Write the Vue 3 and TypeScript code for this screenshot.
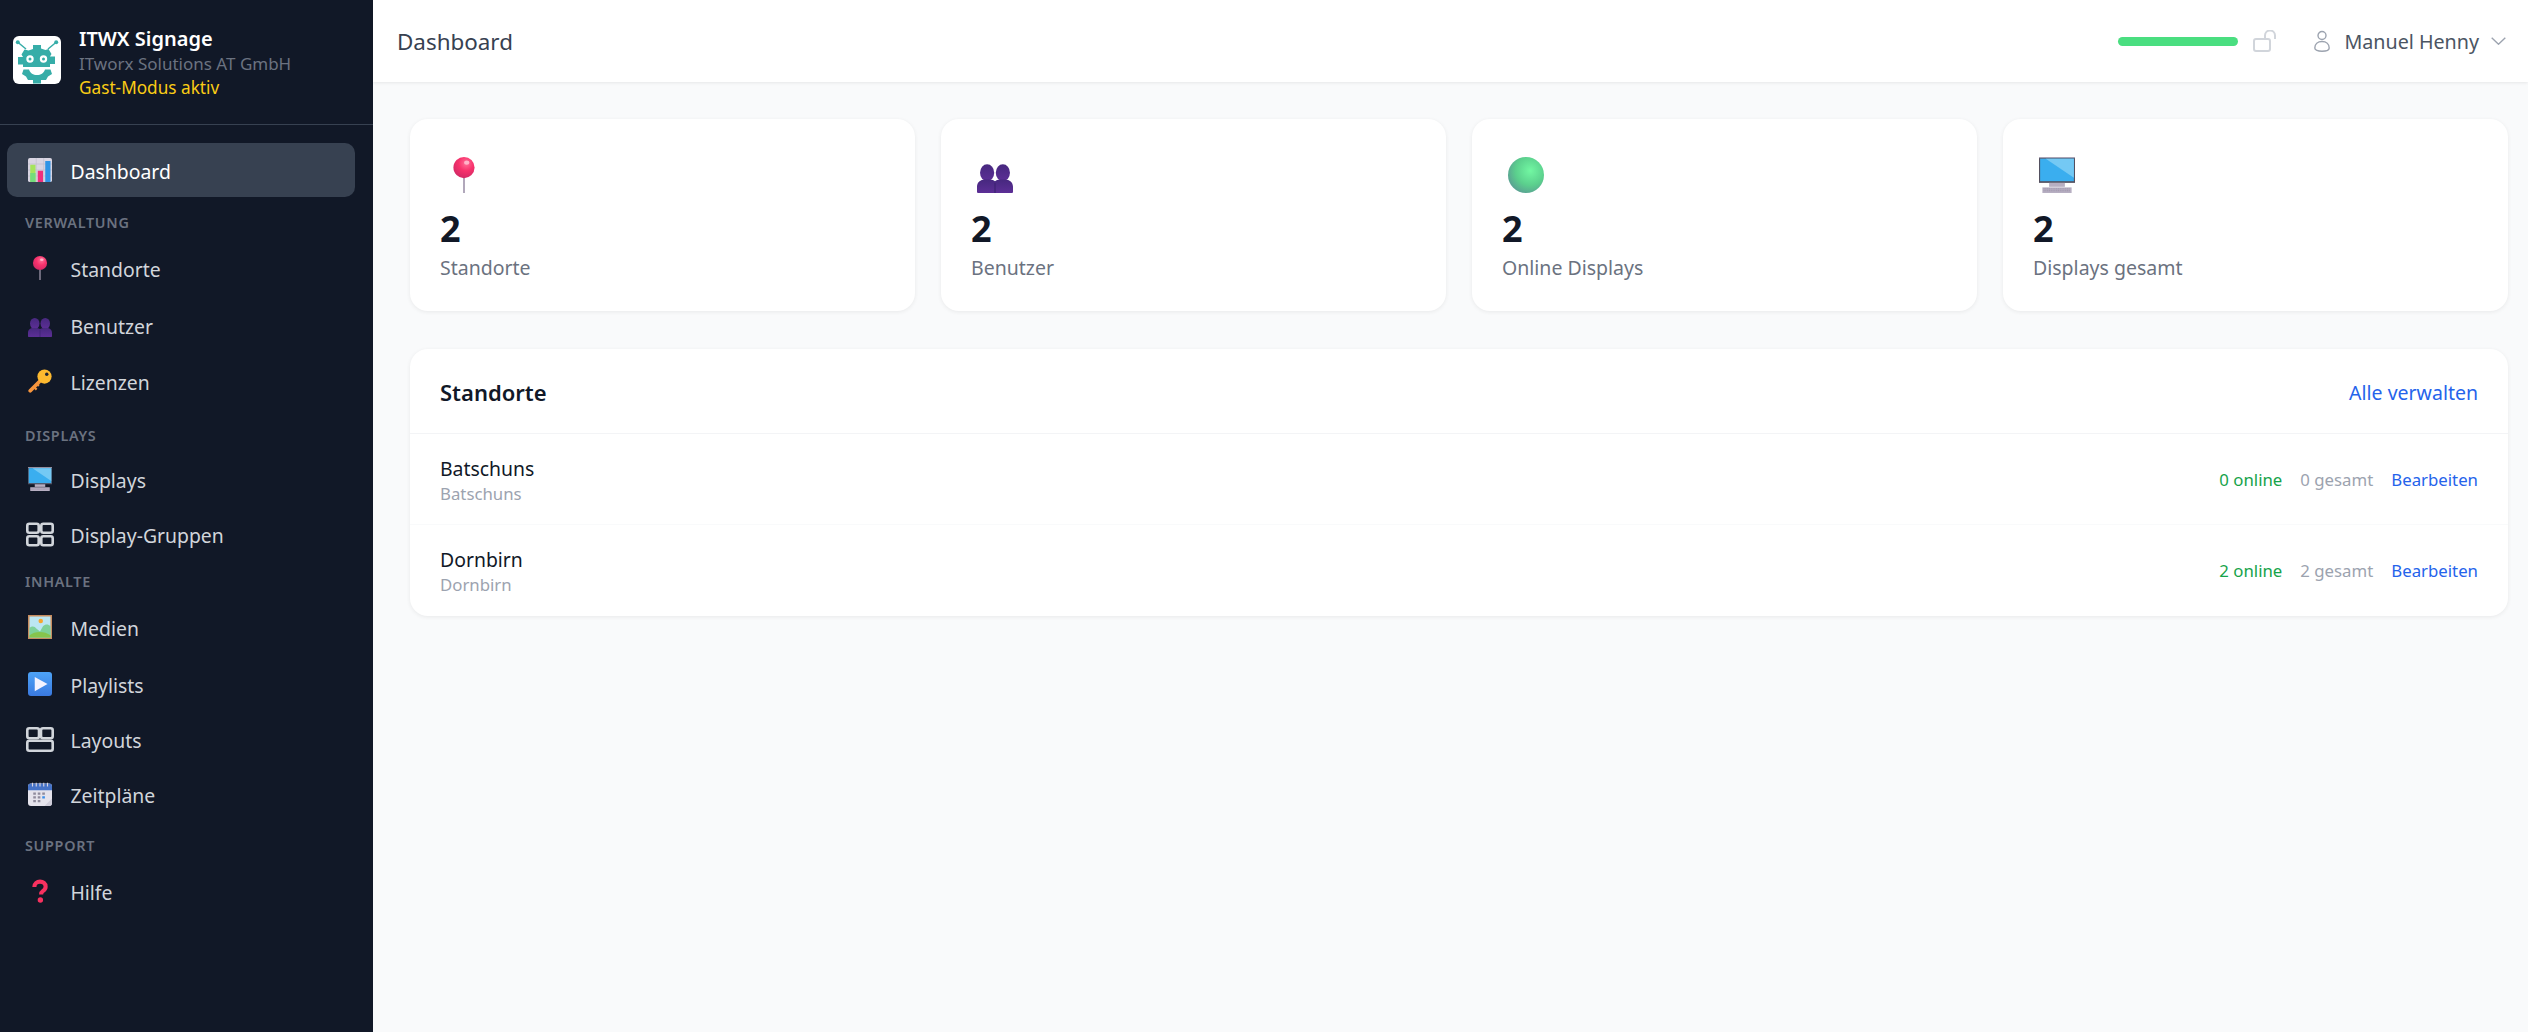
<template>
  <div class="app">
    <!-- shared icon symbols -->
    <svg class="icon-defs" aria-hidden="true">
      <defs>
        <radialGradient id="gPin" cx="0.6" cy="0.3" r="0.7">
          <stop offset="0" stop-color="#ff6f97" />
          <stop offset="0.5" stop-color="#f8326c" />
          <stop offset="1" stop-color="#d42a66" />
        </radialGradient>
        <radialGradient id="gBall" cx="0.62" cy="0.38" r="0.68">
          <stop offset="0" stop-color="#72f7a2" />
          <stop offset="0.6" stop-color="#5bcf8d" />
          <stop offset="1" stop-color="#5a9f93" />
        </radialGradient>
        <linearGradient id="gPlay" x1="0" y1="0" x2="0" y2="1">
          <stop offset="0" stop-color="#4da3f7" />
          <stop offset="1" stop-color="#3a79e0" />
        </linearGradient>
        <linearGradient id="gUser" x1="0" y1="0" x2="0" y2="1">
          <stop offset="0" stop-color="#47287f" />
          <stop offset="1" stop-color="#5c2f96" />
        </linearGradient>
      </defs>
      <symbol id="i-chart" viewBox="0 0 32 32">
        <rect width="32" height="32" rx="2.5" fill="#d9d5e2" />
        <path d="M0 8h32M0 16h32M0 24h32M11 0v32M21 0v32" stroke="#c2bdcd" stroke-width="1" />
        <rect x="3" y="9" width="7" height="23" fill="#a5e45c" />
        <rect x="3" y="20" width="7" height="12" fill="#74dc7c" />
        <rect x="13" y="17" width="7" height="15" fill="#ef2f7c" />
        <rect x="23" y="4" width="7" height="28" fill="#2f94e6" />
      </symbol>
      <symbol id="i-pin" viewBox="0 0 32 32">
        <rect x="15.2" y="18" width="1.6" height="14" fill="#a99fb4" />
        <circle cx="16" cy="9.4" r="9.4" fill="url(#gPin)" />
        <ellipse cx="18.4" cy="5" rx="2.4" ry="1.8" fill="#ffb3c8" />
      </symbol>
      <symbol id="i-users" viewBox="0 0 32 32">
        <g fill="url(#gUser)">
          <ellipse cx="9" cy="14" rx="6.300" ry="7.500" />
          <ellipse cx="23" cy="14" rx="6.300" ry="7.500" />
          <path d="M0 31v-4.500C0 22.500 3 20 7 20h4c3 0 5 1.500 5 1.500s2-1.500 5-1.500h4c4 0 7 2.500 7 6.500V31a1 1 0 0 1-1 1H1a1 1 0 0 1-1-1z" />
        </g>
        <path d="M16 23v9" stroke="#3c2370" stroke-width="1" />
      </symbol>
      <symbol id="i-key" viewBox="0 0 32 32">
        <path d="M20 12 3 29" stroke="#f7953d" stroke-width="5" stroke-linecap="round" />
        <path d="m8 24 3.500 3.500M12 20l2.500 2.500" stroke="#f7953d" stroke-width="3" />
        <circle cx="22" cy="10" r="9.500" fill="#fdb92f" />
        <circle cx="25" cy="7" r="2.300" fill="#1f2433" />
      </symbol>
      <symbol id="i-monitor" viewBox="0 0 32 32">
        <rect x="0" y="0" width="32" height="23" fill="#54505f" />
        <rect x="0" y="0" width="32" height="1" fill="#a9a3b4" />
        <rect x="1" y="1.500" width="30" height="20" fill="#3aaeef" />
        <path d="M6 1.500h25v17z" fill="#74c9f4" />
        <rect x="9" y="23" width="14" height="3.500" fill="#b7afc2" />
        <rect x="3" y="27" width="26" height="5" fill="#b7afc2" />
        <path d="M4 28.300h24M4 30h24" stroke="#938aa2" stroke-width=".6" stroke-dasharray="1 .6" />
      </symbol>
      <symbol id="i-group" viewBox="0 0 28 24">
        <g fill="none" stroke="#d1d5db" stroke-width="2.600">
          <rect x="1.300" y="1.300" width="11.400" height="9" rx="2" />
          <rect x="15.300" y="1.300" width="11.400" height="9" rx="2" />
          <rect x="1.300" y="13.700" width="11.400" height="9" rx="2" />
          <rect x="15.300" y="13.700" width="11.400" height="9" rx="2" />
        </g>
      </symbol>
      <symbol id="i-picture" viewBox="0 0 32 32">
        <rect width="32" height="32" fill="#c78c5f" />
        <rect x="2" y="2" width="28" height="28" fill="#bce6f2" />
        <circle cx="17" cy="8" r="3" fill="#f8a62d" />
        <path d="M2 17c4-3 7-2 9 1l5 4 4-7c3-3 7-3 10 0v15H2z" fill="#7fd199" />
        <path d="M2 30v-3c7-6 20-6 28 0v3z" fill="#86c44c" />
      </symbol>
      <symbol id="i-play" viewBox="0 0 32 32">
        <rect width="32" height="32" rx="4" fill="url(#gPlay)" />
        <path d="M9 6.500 26 16 9 25.500z" fill="#f4f3ff" />
      </symbol>
      <symbol id="i-layout" viewBox="0 0 28 25">
        <g fill="none" stroke="#d1d5db" stroke-width="2.600">
          <rect x="1.300" y="1.300" width="11.700" height="10" rx="2" />
          <rect x="15" y="1.300" width="11.700" height="10" rx="2" />
          <rect x="1.300" y="13.700" width="25.400" height="10" rx="2" />
        </g>
      </symbol>
      <symbol id="i-calendar" viewBox="0 0 32 32">
        <rect x="0" y="2" width="32" height="30" rx="4" fill="#e5e3ec" />
        <path d="M0 11V6a4 4 0 0 1 4-4h24a4 4 0 0 1 4 4v5z" fill="#4673c8" />
        <path d="M6 1v5M11 1v5M16 1v5M21 1v5M26 1v5" stroke="#d9d6e3" stroke-width="1.500" />
        <g fill="#8f8b9c">
          <rect x="7" y="14" width="3.500" height="3" /><rect x="13" y="14" width="3.500" height="3" /><rect x="19" y="14" width="3.500" height="3" />
          <rect x="7" y="19" width="3.500" height="3" /><rect x="13" y="19" width="3.500" height="3" />
          <rect x="7" y="24" width="3.500" height="3" /><rect x="13" y="24" width="3.500" height="3" />
        </g>
        <rect x="19" y="19" width="3.500" height="3" fill="#3b8ee8" />
        <path d="M32 22v6a4 4 0 0 1-4 4h-6z" fill="#cfccd9" />
      </symbol>
      <symbol id="i-help" viewBox="0 0 32 32">
        <path d="M8.500 10.500C8.500 6 12 3.500 16 3.500s7.500 2.500 7.500 6.700c0 3-1.800 4.500-3.800 6-1.600 1.100-2.200 2-2.200 4.300" fill="none" stroke="#f8315f" stroke-width="5.500" />
        <circle cx="16.500" cy="28" r="3.600" fill="#f8315f" />
      </symbol>
    </svg>

    <aside class="sidebar">
      <div class="brand">
        <div class="logo">
          <svg viewBox="0 0 48 48" width="48" height="48">
            <g fill="#36ada8">
              <path d="M4.500 6 13 13M43.500 6 35 13" stroke="#36ada8" stroke-width="1.500" />
              <circle cx="4.800" cy="6.200" r="2" />
              <circle cx="43.200" cy="6.200" r="2" />
              <path d="M20 9h8v3.500l4.500 1.500 3-1 3 5-1.500 2.500h5v7.500h-5V31H10v-2.500H5V21h5L8.500 18.500l3-5 4 1 4.500-1.500z" />
              <path d="M10.500 33.500h5.500c1.500 4 4 5.500 8 5.500s6.500-1.500 8-5.500h5.500L39 38l-4 2.500L33 44h-5v3.500h-8V44h-5l-2-3.500L9 38z" />
            </g>
            <g fill="none" stroke="#fff" stroke-width="2.200">
              <circle cx="17" cy="23" r="2.600" />
              <circle cx="30.500" cy="23" r="2.600" />
            </g>
          </svg>
        </div>
        <div class="brand-text">
          <div class="brand-name">ITWX Signage</div>
          <div class="brand-org">ITworx Solutions AT GmbH</div>
          <div class="brand-mode">Gast-Modus aktiv</div>
        </div>
      </div>
      <nav class="nav">
        <template v-for="entry in navEntries" :key="entry.label">
          <div v-if="entry.section" class="nav-section" :class="entry.section">{{ entry.label }}</div>
          <a v-else class="nav-item" :class="{ active: entry.active, slim: entry.slim }">
            <svg class="nav-icon" :class="{ wide: entry.slim }"><use :href="'#i-' + entry.icon" /></svg>
            <span>{{ entry.label }}</span>
          </a>
        </template>
      </nav>
    </aside>

    <div class="main">
      <header class="topbar">
        <div class="page-title">Dashboard</div>
        <div class="top-right">
          <div class="progress"></div>
          <svg class="lock" viewBox="0 0 24 22" width="24" height="22" fill="none" stroke="#d1d5db" stroke-width="2">
            <rect x="1" y="9" width="16" height="12" rx="2" />
            <path d="M12 9V5.500a5 5 0 0 1 10 0V9" />
          </svg>
          <div class="user">
            <svg viewBox="0 0 16 22" width="16" height="22" fill="none" stroke="#9ca3af" stroke-width="1.400">
              <circle cx="8" cy="5.500" r="4" />
              <path d="M.8 18c0-4 3-6.500 7.200-6.500s7.200 2.500 7.200 6.500c0 2-3 3.200-7.200 3.200S.8 20 .8 18z" />
            </svg>
            <span class="user-name">Manuel Henny</span>
            <svg viewBox="0 0 15 8" width="15" height="8" fill="none" stroke="#9ca3af" stroke-width="1.400">
              <path d="m.7.7 6.800 6.500L14.300.7" />
            </svg>
          </div>
        </div>
      </header>

      <main class="content">
        <section class="stats">
          <div v-for="stat in stats" :key="stat.label" class="stat-card">
            <div class="stat-icon">
              <svg v-if="stat.icon === 'ball'" viewBox="0 0 36 36" width="36" height="36"><circle cx="18" cy="18" r="18" fill="url(#gBall)" /></svg>
              <svg v-else width="36" height="36"><use :href="'#i-' + stat.icon" /></svg>
            </div>
            <div class="stat-value">{{ stat.value }}</div>
            <div class="stat-label">{{ stat.label }}</div>
          </div>
        </section>

        <section class="panel">
          <div class="panel-head">
            <h2>Standorte</h2>
            <a class="link">Alle verwalten</a>
          </div>
          <div v-for="loc in locations" :key="loc.name" class="loc-row">
            <div class="loc-text">
              <div class="loc-name">{{ loc.name }}</div>
              <div class="loc-city">{{ loc.city }}</div>
            </div>
            <div class="loc-meta">
              <span class="online">{{ loc.online }} online</span>
              <span class="total">{{ loc.total }} gesamt</span>
              <a class="edit">Bearbeiten</a>
            </div>
          </div>
        </section>
      </main>
    </div>
  </div>
</template>

<script setup lang="ts">
interface NavEntry {
  label: string
  icon?: string
  section?: string
  active?: boolean
  slim?: boolean
}

const navEntries: NavEntry[] = [
  { label: 'Dashboard', icon: 'chart', active: true },
  { label: 'Verwaltung', section: 'sec-admin' },
  { label: 'Standorte', icon: 'pin' },
  { label: 'Benutzer', icon: 'users' },
  { label: 'Lizenzen', icon: 'key' },
  { label: 'Displays', section: 'sec-displays' },
  { label: 'Displays ', icon: 'monitor' },
  { label: 'Display-Gruppen', icon: 'group', slim: true },
  { label: 'Inhalte', section: 'sec-content' },
  { label: 'Medien', icon: 'picture' },
  { label: 'Playlists', icon: 'play' },
  { label: 'Layouts', icon: 'layout', slim: true },
  { label: 'Zeitpläne', icon: 'calendar' },
  { label: 'Support', section: 'sec-support' },
  { label: 'Hilfe', icon: 'help' }
]

const stats = [
  { icon: 'pin', value: 2, label: 'Standorte' },
  { icon: 'users', value: 2, label: 'Benutzer' },
  { icon: 'ball', value: 2, label: 'Online Displays' },
  { icon: 'monitor', value: 2, label: 'Displays gesamt' }
]

const locations = [
  { name: 'Batschuns', city: 'Batschuns', online: 0, total: 0 },
  { name: 'Dornbirn', city: 'Dornbirn', online: 2, total: 2 }
]
</script>

<style>
html, body { background: #f9fafb; }
</style>

<style scoped>
.app {
  display: flex; min-height: 1032px;
  font-family: "Noto Sans", "Open Sans", sans-serif;
  color: #111827;
}
.icon-defs { position: absolute; width: 0; height: 0; overflow: hidden; }

.sidebar { width: 373px; flex-shrink: 0; background: #111827; }
.brand {
  display: flex; align-items: center; gap: 18px;
  height: 125px; padding: 0 13px; box-sizing: border-box;
  border-bottom: 1px solid #374151;
}
.logo {
  width: 48px; height: 48px; background: #fff; border-radius: 6px;
  flex-shrink: 0; margin-top: -4px;
}
.logo svg { display: block; }
.brand-text { margin-top: 2px; }
.brand-name { font-size: 20px; font-weight: 600; color: #fff; line-height: 25px; }
.brand-org { font-size: 17px; color: #6b7280; line-height: 25px; }
.brand-mode { font-size: 17.2px; color: #facc15; line-height: 24px; }

.nav { padding: 18px 18px 0 7px; }
.nav-item {
  display: flex; align-items: center; gap: 18.5px;
  height: 56.5px; padding-left: 21px; box-sizing: border-box;
  font-size: 19.4px; color: #d1d5db; border-radius: 10px;
}
.nav-item span { padding-top: 3px; }
.nav-item.slim { height: 54px; }
.nav-item.active { height: 54px; background: #374151; color: #fff; }
.nav-icon { width: 24px; height: 24px; flex-shrink: 0; }
.nav-icon.wide { width: 28px; height: 25px; margin-left: -2px; margin-right: -2px; }
.nav-section {
  padding: 16px 0 0 18px; height: 43px; box-sizing: border-box;
  font-size: 14.4px; line-height: 20px; font-weight: 600; letter-spacing: 0.7px;
  text-transform: uppercase; color: #6b7280;
}
.sec-displays { height: 41px; }
.sec-content { margin-top: -5px; }
.sec-support { margin-top: -3px; }

.main { flex: 1; min-width: 0; background: #f9fafb; }
.topbar {
  display: flex; align-items: center; justify-content: space-between;
  height: 82px; padding: 0 22px 0 24px; box-sizing: border-box;
  background: #fff; box-shadow: 0 1px 3px rgba(0, 0, 0, 0.08);
}
.page-title { font-size: 22.4px; color: #374151; }
.top-right { display: flex; align-items: center; }
.progress { width: 120px; height: 9px; border-radius: 5px; background: #4ade80; }
.lock { margin-left: 15px; }
.user { display: flex; align-items: center; margin-left: 37px; }
.user-name { margin: 0 12px 0 14px; font-size: 19.7px; color: #4b5563; }

.content { padding: 37px 20px 0 37px; }
.stats { display: grid; grid-template-columns: repeat(4, 1fr); gap: 26px; }
.stat-card {
  height: 192px; padding: 38px 30px 0; box-sizing: border-box;
  background: #fff; border-radius: 18px;
  box-shadow: 0 1px 4px rgba(0, 0, 0, 0.07);
}
.stat-icon { display: flex; justify-content: center; width: 48px; height: 36px; }
.stat-value { margin-top: 12px; font-size: 36px; line-height: 48px; font-weight: 700; color: #111827; }
.stat-label { font-size: 19.5px; line-height: 26px; color: #6b7280; margin-top: 2px; }

.panel {
  margin-top: 38px; background: #fff; border-radius: 18px;
  box-shadow: 0 1px 4px rgba(0, 0, 0, 0.07);
}
.panel-head {
  display: flex; align-items: center; justify-content: space-between;
  height: 85px; padding: 2px 30px 0; box-sizing: border-box;
  border-bottom: 1px solid #f3f4f6;
}
.panel-head h2 { margin: 0; font-size: 22px; font-weight: 600; color: #111827; }
.link { font-size: 19.5px; color: #2563eb; }
.loc-row {
  display: flex; align-items: center; justify-content: space-between;
  height: 91px; padding: 0 30px; box-sizing: border-box;
  border-bottom: 1px solid #f9fafb;
}
.loc-row:last-child { border-bottom: 0; }
.loc-text { padding-top: 3px; }
.loc-name { font-size: 19.4px; line-height: 26px; color: #111827; }
.loc-city { font-size: 16.8px; line-height: 24px; color: #9ca3af; }
.loc-meta { display: flex; gap: 18px; font-size: 16.8px; }
.online { color: #16a34a; }
.total { color: #9ca3af; }
.edit { color: #2563eb; }
</style>
